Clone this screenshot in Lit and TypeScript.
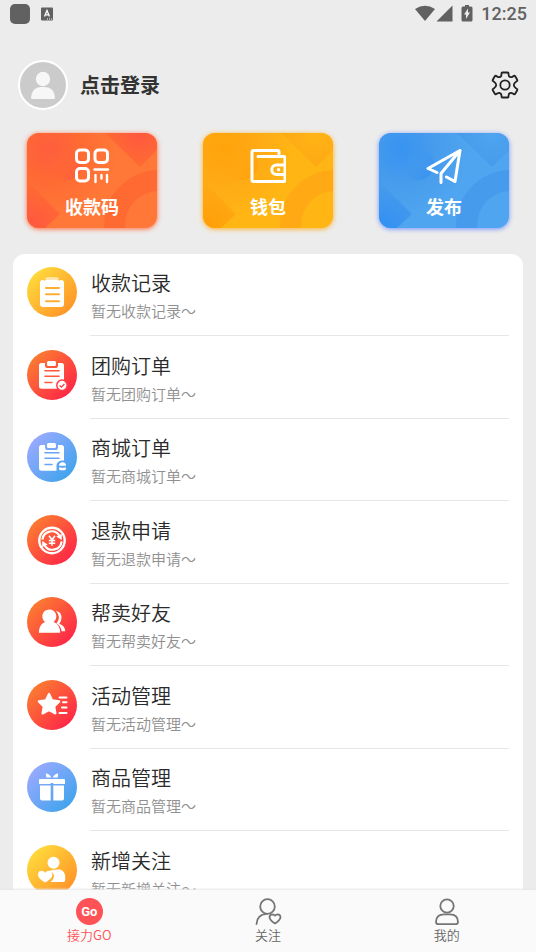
import { LitElement, html, css, svg } from "lit";
import { customElement, property } from "lit/decorators.js";

const clipboard = svg`
  <path fill="#fff" d="M14.5 13h3.500q-.5 5 2 5h9q2.500 0 2-5h3.500q2.500 0 2.500 2.500v21q0 2.200-2.500 2.200h-20q-2.500 0-2.500-2.200v-21q0-2.500 2.500-2.500z"/>
  <rect x="20" y="11" width="9" height="5" rx="1.500" fill="#fff"/>`;

const rowIcons: Record<string, unknown> = {
  receipt: svg`
    <path fill="#fff" d="M16 13h2q0-2.500 2-2.500h10q2 0 2 2.500h2q3 0 3 3v21q0 3-3 3h-18q-3 0-3-3v-21q0-3 3-3z"/>
    <path d="M17.500 14q0-2 2.500-2h10q2.500 0 2.500 2" fill="none" stroke="#ffc03a" stroke-width=".8"/>
    <path d="M19 21h13M19 27.300h13M19 34.300h13" stroke="#ffae33" stroke-width="2" stroke-linecap="round"/>`,
  group: svg`${clipboard}
    <path d="M18 20.700h14M18 26.300h14M18 32.500h7" stroke="#ff5a3d" stroke-width="1.600" stroke-linecap="round"/>
    <circle cx="35" cy="35.300" r="5.200" fill="#fff" stroke="#ff3f43" stroke-width="1.500"/>
    <path d="M32.600 35.500l1.800 1.700 3-3.200" fill="none" stroke="#ff3f43" stroke-width="1.300"/>`,
  mall: svg`${clipboard}
    <path d="M18 20.700h14M18 26.300h14M18 32.500h7" stroke="#6ba4f6" stroke-width="1.600" stroke-linecap="round"/>
    <path d="M29.500 39v-6q1-4.500 6-4.500h3v10.500z" fill="#5aa5f3"/>
    <path d="M32 33.800q0-3.500 3.500-3.500t3.500 3.500zM32 35.600h2.500q1 1 2 0h2.500v1q0 1.600-1.600 1.600h-3.800q-1.600 0-1.600-1.600z" fill="#fff"/>`,
  refund: svg`
    <circle cx="25" cy="25.500" r="12.700" fill="none" stroke="#fff" stroke-width="2.400"/>
    <path d="M15.400 24.700a9.200 9.200 0 0 1 17-4M34.600 26.300a9.200 9.200 0 0 1-17 4" fill="none" stroke="#fff" stroke-width="2.200"/>
    <path d="M34.800 19v6l-5.500-3.500zM15.200 32v-6l5.500 3.500z" fill="#fff"/>
    <path d="M22 20.800l3 4 3-4M25 24.800v6M21.800 25.500h6.400M21.800 28.200h6.400" fill="none" stroke="#fff" stroke-width="1.600"/>`,
  friends: svg`
    <path fill="#fff" d="M29 14q5.500.6 5.500 6.500 0 4-2.300 6.300 5.800 2 6 7.400h-3.700q-.5-5.300-5.200-8 3-3 2.500-7-.6-3-2.800-5.200z"/>
    <path fill="#fff" d="M22 12.500a7 7 0 0 1 4.600 12.500q6.400 2.500 6.600 10.700h-21.400q.2-8.200 6.200-10.700a7 7 0 0 1 4-12.500z"/>`,
  activity: svg`
    <path d="M22 14l3.200 6.400 7 1-5 5 1.200 7-6.400-3.300-6.400 3.300 1.200-7-5-5 7-1z" fill="#fff" stroke="#fff" stroke-width="2.200" stroke-linejoin="round"/>
    <path d="M32.500 17.500h7M36 22.300h3.500M35 27.500h4.500M32.500 33h7" stroke="#fff" stroke-width="2" stroke-linecap="round"/>`,
  goods: svg`
    <path fill="#fff" d="M13 17h24q1 0 1 1v4h-11.700v-1h-2.600v1h-11.700v-4q0-1 1-1zM13 23.500h10.700v15h-8.700q-2 0-2-2zM26.300 23.500h10.700v13q0 2-2 2h-8.700z"/>
    <path fill="#fff" d="M24.300 15.500h-5l-.5-4q3.500.2 5.500 4zM25.700 15.500h5l.5-4q-3.500.2-5.500 4z"/>`,
  follow: svg`
    <circle cx="26.500" cy="17.700" r="6" fill="#fff"/>
    <path fill="#fff" d="M22 26q4 -2 11 -1.500 5.200 1.500 5.200 8v2.500q0 2-2 2h-12.700q3.500-3 3.500-6.500-.5-3.500-5-4.500z"/>
    <path fill="#fff" d="M18.200 37.500q-7.200-4-7.200-8 .2-3.500 3.500-3.700 2.500 0 3.700 2 1.200-2 3.700-2 3.300.2 3.500 3.700 0 4-7.200 8z"/>`,
};

const tileIcons: Record<string, unknown> = {
  code: svg`
    <rect x="2.500" y="2" width="12" height="12.500" rx="3.500"/><rect x="21" y="2" width="12.500" height="12.500" rx="3.500"/>
    <rect x="2.500" y="20.500" width="12" height="12.500" rx="3.500"/>
    <path stroke-width="2.400" d="M20.500 21.500h13.500M21.500 27v7M27.500 27v3.500M33 27v7"/>`,
  wallet: svg`
    <path stroke-linejoin="round" d="M29 6v-2q0-1.500-1.500-1.500h-24q-1.500 0-1.500 1.500v28q0 1.500 1.500 1.500h30q1.500 0 1.500-1.500v-22q0-1.500-1.500-1.500h-25.500"/>
    <path d="M35 17h-8.500a4.700 4.700 0 0 0 0 9.500h8.500"/><circle cx="28.500" cy="21.700" r="1" stroke-width="1.500"/>`,
  send: svg`
    <path stroke-linejoin="round" d="M11 24.500l-9-4 32-18-5 31-8.500-4.500M34 2.500l-19 23v9"/>`,
};

@customElement("app-tile")
export class AppTile extends LitElement {
  @property() icon = "";
  @property() label = "";

  static styles = css`
    :host { display: block; flex: 0 1 130px; min-width: 0; }
    .tile {
      display: grid; width: 100%; height: 95px; padding: 0; border: 0; border-radius: 12px;
      overflow: hidden; background: var(--base); color: #fff; cursor: pointer;
      box-shadow: 0 1px 5px var(--glow);
      font: 700 18px/24px "Noto Sans CJK SC", sans-serif;
    }
    .pattern, .face { grid-area: 1 / 1; }
    .pattern { width: 100%; height: 95px; }
    .face { display: flex; flex-direction: column; align-items: center; padding-top: 15px; gap: 10px; z-index: 1; }
    .glyph { width: 36px; height: 36px; fill: none; stroke: #fff; stroke-width: 3; stroke-linecap: round; }
    .ring { fill: var(--shade); }
    .mid { stop-color: var(--shade); }
    .full { stop-color: var(--deep); }
    .clear { stop-color: var(--shade); stop-opacity: 0; }
    .tip { stop-color: var(--tip); }
    .veil { fill: url(#veil); }
    .blob { fill: url(#blob); }
    .corner { fill: url(#corner); }
    .wedge { fill: url(#wedge); }
  `;

  render() {
    return html`<button class="tile">
      <svg class="pattern" viewBox="0 0 130 95" preserveAspectRatio="none" aria-hidden="true">
        <defs>
          <radialGradient id="veil" gradientUnits="userSpaceOnUse" cx="22" cy="16" r="68"><stop class="full" stop-opacity=".8" offset="0"/><stop class="mid" offset=".45"/><stop class="clear" offset="1"/></radialGradient>
          <linearGradient id="blob" x1="0" y1=".2" x2="1" y2="1"><stop class="clear" offset=".1"/><stop class="full" offset="1"/></linearGradient>
          <radialGradient id="corner" gradientUnits="userSpaceOnUse" cx="112" cy="0" r="32"><stop class="tip" offset="0"/><stop class="mid" offset="1"/></radialGradient>
          <radialGradient id="wedge" gradientUnits="userSpaceOnUse" cx="4" cy="93" r="40"><stop class="full" offset="0"/><stop class="mid" offset="1"/></radialGradient>
        </defs>
        <path class="veil" d="M0 0h130v95h-130z"/>
        <circle class="blob" cx="39" cy="31" r="16"/>
        <path class="corner" d="M78 0l35 34 17-17v-17z"/>
        <path class="wedge" d="M0 48l33 33-15 14h-18z"/>
        <path class="ring" fill-rule="evenodd" d="M77 92a55 55 0 0 1 110 0 55 55 0 0 1-110 0zM98 92a34 34 0 0 0 68 0 34 34 0 0 0-68 0z"/>
      </svg>
      <span class="face">
        <svg class="glyph" viewBox="0 0 36 36" aria-hidden="true">${tileIcons[this.icon]}</svg>
        <span>${this.label}</span>
      </span>
    </button>`;
  }
}

@customElement("app-row")
export class AppRow extends LitElement {
  @property() icon = "";
  @property() tone = "";
  @property() label = "";

  static styles = css`
    :host { display: block; }
    .row { display: flex; gap: 13px; height: 82px; color: inherit; text-decoration: none; }
    .badge { flex: none; width: 50px; height: 50px; margin-top: 13px; border-radius: 50%; }
    .yellow { background: linear-gradient(135deg, #ffdc3c 10%, #ff9228 90%); }
    .red { background: linear-gradient(135deg, #fb7f30 10%, #ff2448 90%); }
    .blue { background: linear-gradient(135deg, #9caaff 10%, #3ea3ec 90%); }
    .text { flex: 1; min-width: 0; border-bottom: 1px solid #e6e6e6; padding: 14px 0 0 1px; font-weight: 350; }
    .title { display: block; font-size: 20px; line-height: 30px; color: #2a2a2a; }
    .note { display: block; margin-top: 1px; font-size: 15px; line-height: 24px; color: #909090; }
  `;

  render() {
    return html`<a class="row" href="#${this.icon}">
      <svg class="badge ${this.tone}" viewBox="0 0 50 50" aria-hidden="true">${rowIcons[this.icon]}</svg>
      <span class="text">
        <span class="title">${this.label}</span>
        <span class="note">暂无${this.label}～</span>
      </span>
    </a>`;
  }
}

@customElement("app-root")
export class AppRoot extends LitElement {
  private rows = [
    ["receipt", "yellow", "收款记录"],
    ["group", "red", "团购订单"],
    ["mall", "blue", "商城订单"],
    ["refund", "red", "退款申请"],
    ["friends", "red", "帮卖好友"],
    ["activity", "red", "活动管理"],
    ["goods", "blue", "商品管理"],
    ["follow", "yellow", "新增关注"],
  ];

  static styles = css`
    :host {
      display: flex; flex-direction: column; height: 100vh; overflow: hidden;
      background: #ececec; color: #333; font-family: "Noto Sans CJK SC", sans-serif;
    }
    .status { flex: none; display: flex; align-items: center; height: 27px; padding: 0 9px 0 10px; color: #616161; }
    .app-mark { width: 20px; height: 20px; border-radius: 5px; background: #616161; }
    .lang { width: 12px; height: 14px; margin-left: 11px; }
    .signals { width: 58px; height: 18px; margin-left: auto; fill: #616161; }
    .time { margin-left: 8px; font: 500 18px/27px Roboto, sans-serif; }
    .head { flex: none; display: flex; align-items: center; justify-content: space-between; padding: 33px 17px 0 18px; }
    .login { display: flex; align-items: center; gap: 12px; padding: 0; border: 0; background: none; color: #333; font: 700 20px/30px "Noto Sans CJK SC", sans-serif; cursor: pointer; }
    .avatar { width: 50px; height: 50px; }
    .gear-button { padding: 0; border: 0; background: none; cursor: pointer; }
    .gear { display: block; width: 28px; height: 28px; fill: none; stroke: #222; stroke-width: 1.8; }
    .tiles { flex: none; display: flex; justify-content: space-between; gap: 12px; padding: 23px 27px 26px; }
    .orange { --base: #ff7837; --shade: #ff6a33; --deep: #ff583f; --tip: #ff583f; --glow: #ff693c; }
    .amber { --base: #ffb514; --shade: #ffa915; --deep: #ff9f08; --tip: #ffb514; --glow: #ffae20; }
    .azure { --base: #50a5f0; --shade: #469bec; --deep: #3390f2; --tip: #50a5f0; --glow: #6f91ff; }
    .list { flex: 1; min-height: 0; overflow: hidden; margin: 0 13px; padding: 0 14px; border-radius: 12px 12px 0 0; background: #fff; }
    .item:nth-child(even) { margin-top: 1px; }
    .tabs { flex: none; display: grid; grid-template-columns: repeat(3, 1fr); padding: 8px 0; background: #fafafa; box-shadow: 0 -1px 2px #e6e6e6; z-index: 1; }
    .tab { display: flex; flex-direction: column; align-items: center; color: #666; font-size: 13px; font-weight: 350; line-height: 18px; text-decoration: none; }
    .active { color: #ff5257; }
    .tab-icon { width: 28px; height: 28px; fill: none; stroke: #757575; stroke-width: 1.8; stroke-linecap: round; stroke-linejoin: round; }
    .go { display: grid; place-items: center; width: 27px; height: 27px; margin-bottom: 1px; border-radius: 50%; background: #ff5257; color: #fff; font: 700 13px/27px Roboto, sans-serif; }
  `;

  render() {
    return html`
      <div class="status">
        <span class="app-mark"></span>
        <svg class="lang" viewBox="0 0 12 14" aria-hidden="true">
          <rect width="12" height="13" y=".5" rx="1" fill="#616161"/>
          <path d="M3.500 9.500l2.500-6 2.500 6M4.500 7.800h3" fill="none" stroke="#fff" stroke-width="1.300"/>
          <path d="M6 12h1M8 12h1M10 12h1" stroke="#fff"/>
        </svg>
        <svg class="signals" viewBox="0 0 58 18" aria-hidden="true">
          <path d="M0 4q10-6.500 20 0l-10 12z"/><path d="M37.500 .5v16h-16z"/>
          <path fill-rule="evenodd" d="M50 0h4v1.500h2q1.500 0 1.500 1.500v12q0 1.500-1.500 1.500h-8q-1.500 0-1.500-1.500v-12q0-1.500 1.500-1.500h2zM53 3.500l-4 6h2v4.500l4-6.500h-2z"/>
        </svg>
        <span class="time">12:25</span>
      </div>
      <header class="head">
        <button class="login">
          <svg class="avatar" viewBox="0 0 50 50" aria-hidden="true">
            <circle cx="25" cy="25" r="24" fill="#cbcbcb" stroke="#fff" stroke-width="2"/>
            <circle cx="25" cy="19" r="7.200" fill="#f7f7f7"/>
            <path d="M13 37.500q1-10.500 10-10.500h4q9 0 10 10.500 0 1.500-1.500 1.500h-21q-1.500 0-1.500-1.500z" fill="#f7f7f7"/>
          </svg>
          点击登录
        </button>
        <button class="gear-button" aria-label="设置">
          <svg class="gear" viewBox="0 0 28 28" aria-hidden="true">
            <path stroke-linejoin="round" d="M10.500 2.300q0-.8.800-.8h5.400q.8 0 .8.800v.9q0 2.600 2.200 3 1 .1 2.300-.8l.9-.5q.8-.4 1.300.3l2 3.600q.4.8-.2 1.300l-1 .6q-2.200 1.600-2.200 3.300t2.200 3.300l1 .6q.6.5.2 1.300l-2 3.600q-.5.700-1.300.3l-.9-.5q-1.300-.9-2.300-.8-2.200.4-2.200 3v.9q0 .8-.8.8h-5.400q-.8 0-.8-.8v-.9q0-2.600-2.200-3-1-.1-2.300.8l-.9.5q-.8.400-1.300-.3l-2-3.600q-.4-.8.200-1.300l1-.6q2.200-1.600 2.200-3.300t-2.200-3.300l-1-.6q-.6-.5-.2-1.300l2-3.600q.5-.7 1.300-.3l.9.500q1.300.9 2.300.8 2.200-.4 2.200-3z"/>
            <circle cx="14" cy="14" r="4.700"/>
          </svg>
        </button>
      </header>
      <section class="tiles">
        <app-tile class="orange" icon="code" label="收款码"></app-tile>
        <app-tile class="amber" icon="wallet" label="钱包"></app-tile>
        <app-tile class="azure" icon="send" label="发布"></app-tile>
      </section>
      <main class="list">
        ${this.rows.map(([icon, tone, label]) => html`<app-row class="item" .icon=${icon} .tone=${tone} .label=${label}></app-row>`)}
      </main>
      <nav class="tabs">
        <a class="tab active" href="#home"><span class="go">Go</span>接力GO</a>
        <a class="tab" href="#following">
          <svg class="tab-icon" viewBox="0 0 28 28" aria-hidden="true">
            <circle cx="13.500" cy="8.500" r="7.300"/>
            <path d="M2.500 26q.5-9.500 10-10.200M21 25.500q-5.500-3.500-5.500-6.500.3-2.500 2.600-2.700 1.800 0 2.900 1.300 1.100-1.300 2.900-1.300 2.300.2 2.600 2.700 0 3-5.500 6.500z"/>
          </svg>关注</a>
        <a class="tab" href="#me">
          <svg class="tab-icon" viewBox="0 0 28 28" aria-hidden="true">
            <circle cx="14" cy="8" r="6.700"/>
            <path d="M3 24q0-7.700 8-7.700h6q8 0 8 7.700 0 2.200-2.500 2.200h-17q-2.500 0-2.500-2.200z"/>
          </svg>我的</a>
      </nav>`;
  }
}
